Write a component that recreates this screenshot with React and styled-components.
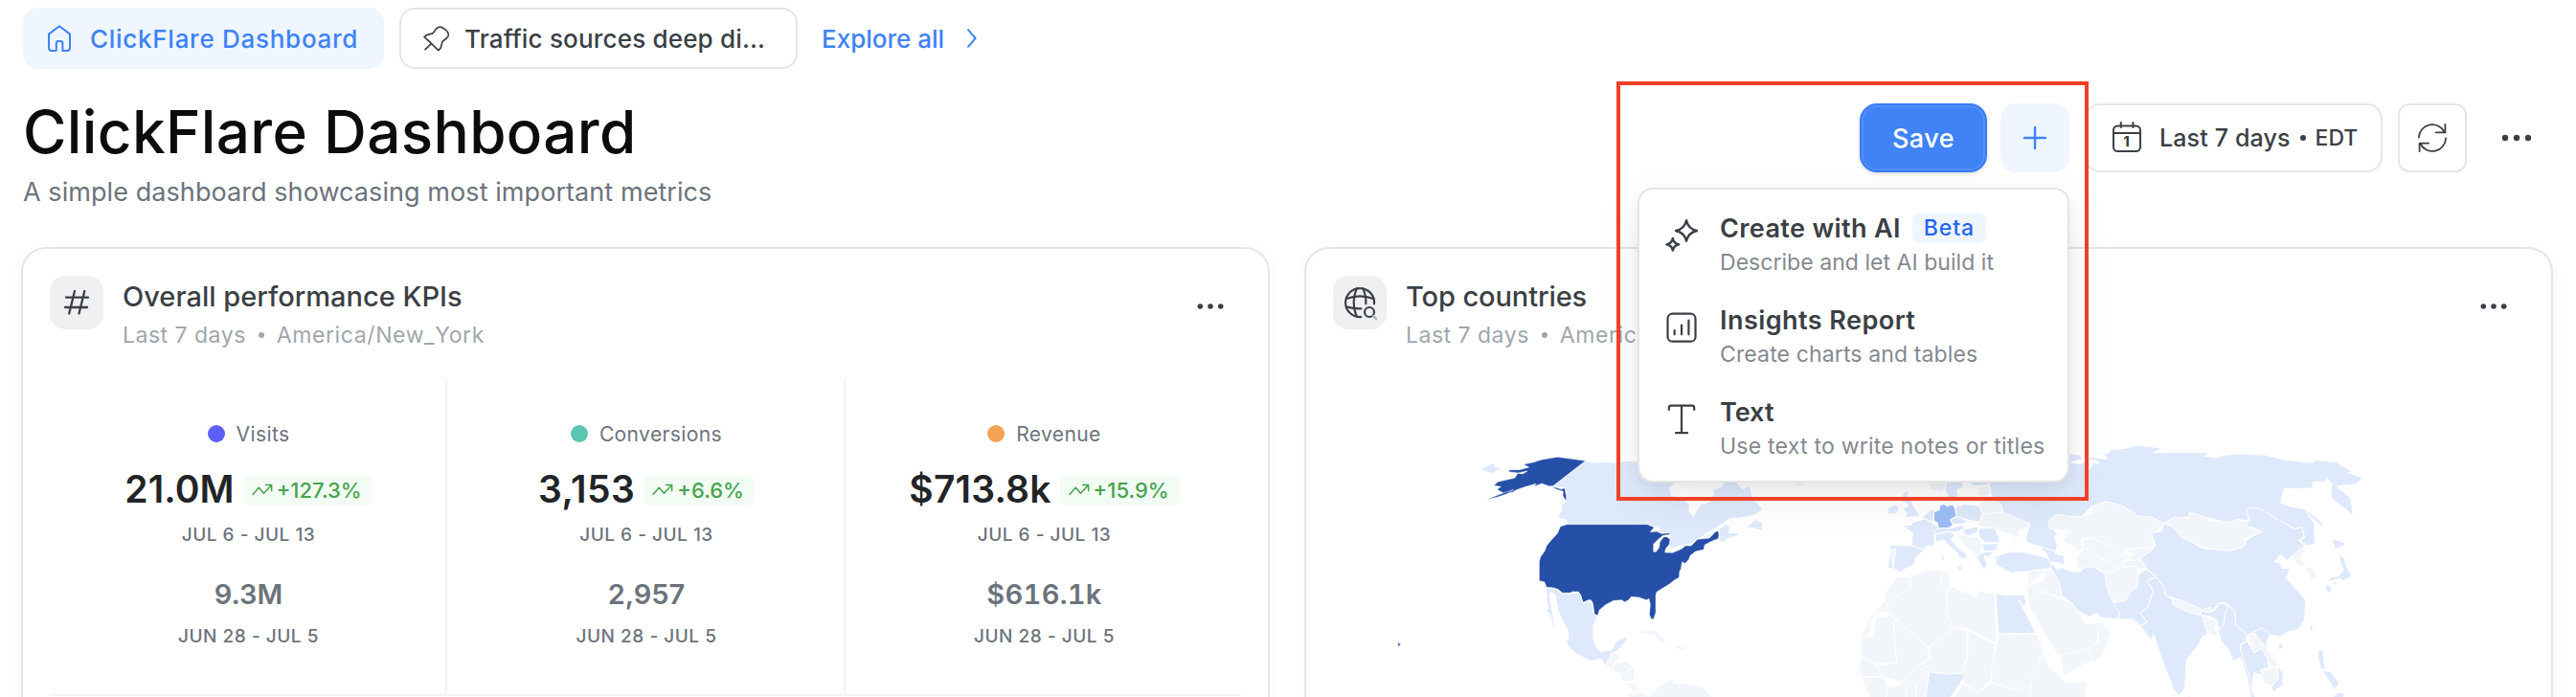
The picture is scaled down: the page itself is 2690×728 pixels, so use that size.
import React from "react";
import styled, { createGlobalStyle } from "styled-components";

const GlobalStyle = createGlobalStyle`
  * {
    box-sizing: border-box;
  }
  body {
    margin: 0;
    background: #fff;
    color: #3b3f45;
    font-family: "Inter", "Liberation Sans", sans-serif;
    overflow: hidden;
  }
  svg {
    display: block;
    flex-shrink: 0;
  }
  button {
    font-family: inherit;
    padding: 0;
    cursor: pointer;
  }
`;

/* icons */

const Stroke = styled.svg`
  fill: none;
  stroke: currentColor;
  stroke-width: ${props => props.$weight || 2};
  stroke-linecap: round;
  stroke-linejoin: round;
`;

const HomeIcon = () => (
  <Stroke width="24" height="28" viewBox="0 0 24 28">
    <path d="M12 1.2 1 9.6V24a3 3 0 0 0 3 3h4.8v-8a2 2 0 0 1 2-2h2.6a2 2 0 0 1 2 2v8H20a3 3 0 0 0 3-3V9.6z" />
  </Stroke>
);

const PinIcon = () => (
  <Stroke width="27" height="27" viewBox="0 0 80 80" $weight={5}>
    <path d="M47 76 3 34Q8 29 15 27L27 24Q31 23 35 16L39 10Q45 2 55 4Q62 6 71 14Q80 23 78 30Q77 34 70 40L61 47Q57 51 56 61Q55 69 47 76z" />
    <path d="M25 55 6 73" />
  </Stroke>
);

const ChevronIcon = () => (
  <Stroke width="10" height="20" viewBox="0 0 10 20">
    <path d="m1 1.2 7.6 8.8L1 18.8" />
  </Stroke>
);

const PlusIcon = () => (
  <Stroke width="26" height="26" viewBox="0 0 26 26" $weight={2.4}>
    <path d="M13 2v22M2 13h22" />
  </Stroke>
);

const CalendarIcon = () => (
  <Stroke width="30" height="32" viewBox="0 0 30 32">
    <rect x="1" y="4.5" width="28" height="26.5" rx="4.5" />
    <path d="M1 12h28M8.8 1v5M21.4 1v5" />
    <DayNumber x="14.5" y="26">
      1
    </DayNumber>
  </Stroke>
);

const DayNumber = styled.text`
  fill: currentColor;
  stroke: none;
  text-anchor: middle;
  font-size: 14px;
  font-weight: 800;
`;

const RefreshIcon = () => (
  <Stroke width="30" height="30" viewBox="0 0 30 30" $weight={1.8}>
    <path d="M.9 14.5A14 14 0 0 1 27.5 9M28.4 1v8.4h-9.6M29.1 15.5A14 14 0 0 1 2.5 21M1.6 29v-8.4h9.6" />
  </Stroke>
);

const DotsIcon = ({ step = 12, r = 3.2 }) => (
  <svg width="32" height="8" viewBox="-16 -4 32 8" fill="currentColor">
    <circle cx={-step} r={r} />
    <circle r={r} />
    <circle cx={step} r={r} />
  </svg>
);

const SparklesIcon = () => (
  <Stroke width="40" height="40" viewBox="0 0 40 40" $weight={2.4}>
    <path d="M25 4.2q2 8.8 11 10.8q-9 2-11 10.8q-2-8.8-11-10.8q9-2 11-10.8z" />
    <path d="M10.8 23q1 5.2 6.3 6.3q-5.3 1-6.3 6.3q-1-5.3-6.3-6.3q5.3-1.1 6.3-6.3z" />
  </Stroke>
);

const ReportIcon = () => (
  <Stroke width="40" height="40" viewBox="0 0 40 40" $weight={2.2}>
    <rect x="5.5" y="5.7" width="29" height="29" rx="5" />
    <path d="M12.6 27.3V23M20 27.3V17.5M27.4 27.3V12.5" />
  </Stroke>
);

const TextIcon = () => (
  <Stroke width="40" height="40" viewBox="0 0 40 40" $weight={2.2}>
    <path d="M6.8 10V8a2.3 2.3 0 0 1 2.3-2.3h21.8A2.3 2.3 0 0 1 33.2 8v2M20 5.7v28.5M14 34.2h12" />
  </Stroke>
);

const HashIcon = () => (
  <Stroke width="56" height="56" viewBox="0 0 56 56" $weight={2.3}>
    <path d="M17 22.7h23M16 33h23M26 16l-5.8 23.5M36.3 16l-5.8 23.5" />
  </Stroke>
);

const GlobeSearchIcon = () => (
  <Stroke width="56" height="56" viewBox="0 0 168 168" $weight={6.5}>
    <path d="M129 88A45 45 0 1 0 88 129" />
    <path d="M74 40Q56 84 74 128M94 40Q104 62 103 88M42 72Q84 56 127 72M44 98Q66 104 88 103" />
    <circle cx="114" cy="114" r="15" />
    <SearchHandle d="m126 126 9 9" />
  </Stroke>
);

const SearchHandle = styled.path`
  stroke: #a3abb3;
`;

const TrendIcon = () => (
  <Stroke width="22" height="13" viewBox="0 0 22 13" $weight={1.5}>
    <path d="m1 11.5 6.3-7.3 5.2 6L20.6 1.5M14.6 1.5h6v6.3" />
  </Stroke>
);

/* page */

const Page = styled.div`
  position: relative;
  width: 2690px;
  height: 728px;
  padding: 8px 24px 0 22px;
  overflow: hidden;
`;

const Label = styled.span`
  white-space: nowrap;
  letter-spacing: ${props => props.$track || 0}px;
`;

const Tabs = styled.nav`
  display: flex;
  align-items: center;
  height: 64px;
  margin-left: 2px;
`;

const Tab = styled.a`
  display: flex;
  align-items: center;
  gap: ${props => (props.$active ? 20 : 16)}px;
  width: ${props => props.$width}px;
  height: 64px;
  margin-right: 16px;
  padding-left: ${props => (props.$active ? 26 : 23)}px;
  border: ${props => (props.$active ? "0" : "2px solid #e5e5e5")};
  border-radius: 16px;
  background: ${props => (props.$active ? "#eff6ff" : "#fff")};
  color: ${props => (props.$active ? "#3e82f7" : "#3b3f45")};
  font-size: 26px;
  font-weight: 500;
`;

const ExploreLink = styled.a`
  display: flex;
  align-items: center;
  gap: 24px;
  margin-left: 9px;
  color: #3e82f7;
  font-size: 26px;
  font-weight: 500;
`;

const Header = styled.header`
  display: flex;
  justify-content: space-between;
  height: 158px;
  margin: 28px 2px 0;
`;

const Title = styled.h1`
  margin: 0;
  color: #0b0c0e;
  font-size: 62px;
  font-weight: 500;
  line-height: 75px;
  letter-spacing: 0.35px;
`;

const Subtitle = styled.p`
  margin: 0;
  color: #6c737b;
  font-size: 27px;
  line-height: 52px;
  letter-spacing: 0.07px;
`;

const Actions = styled.div`
  display: flex;
  gap: 16px;
  height: 72px;
  margin-top: 8px;
`;

const SaveButton = styled.button`
  width: 133px;
  height: 72px;
  margin-right: -2px;
  border: 2px solid #3a7df5;
  border-radius: 18px;
  background: #4083f7;
  box-shadow: inset 0 0 0 2px rgba(255, 255, 255, 0.1),
    0 2px 4px rgba(0, 0, 0, 0.12);
  color: #fff;
  font-size: 27px;
  font-weight: 500;
`;

const AddWrap = styled.div`
  position: relative;
`;

const SquareButton = styled.button`
  display: flex;
  align-items: center;
  justify-content: center;
  width: 72px;
  height: 72px;
  border: ${props => (props.$outlined ? "2px solid #e5e5e5" : "0")};
  border-radius: ${props => (props.$outlined ? 12 : 16)}px;
  background: ${props => (props.$tinted ? "#eff6ff" : "transparent")};
  color: ${props => (props.$tinted ? "#3e82f7" : "#3b3f45")};
`;

const DateButton = styled.button`
  display: flex;
  align-items: center;
  width: 311px;
  height: 72px;
  padding-left: 27px;
  border: 2px solid #e5e5e5;
  border-radius: 16px;
  background: #fff;
  color: #3b3f45;
  font-size: 25px;
  font-weight: 500;
  svg {
    margin: -2px 19px 0 0;
  }
`;

const Bullet = styled.i`
  width: 6px;
  height: 6px;
  margin: 0 ${props => props.$gap}px;
  border-radius: 50%;
  background: currentColor;
`;

const Zone = styled.span`
  font-size: 23px;
`;

/* add menu */

const Menu = styled.div`
  position: absolute;
  z-index: 2;
  top: 88px;
  right: 0;
  width: 451px;
  height: 308px;
  padding: 8px;
  border: 2px solid #e5e5e5;
  border-radius: 16px;
  background: #fff;
  box-shadow: 0 16px 48px rgba(0, 0, 0, 0.08), 0 4px 12px rgba(0, 0, 0, 0.05);
`;

const MenuItem = styled.div`
  display: flex;
  gap: 20px;
  height: 96px;
  padding: 14px 0 0 16px;
  svg {
    margin-top: 6px;
  }
`;

const MenuTitle = styled.div`
  display: flex;
  align-items: center;
  gap: 12px;
  height: 36px;
  font-size: 27px;
  font-weight: 600;
`;

const MenuText = styled.div`
  color: #85888f;
  font-size: 23px;
  line-height: 37px;
`;

const Beta = styled.span`
  width: 77px;
  height: 32px;
  border-radius: 8px;
  background: #eff6ff;
  color: #2563f5;
  font-size: 23px;
  font-weight: 500;
  line-height: 32px;
  letter-spacing: 0.9px;
  text-align: center;
`;

/* cards */

const Cards = styled.main`
  display: grid;
  grid-template-columns: 1304px 1304px;
  gap: 36px;
`;

const Card = styled.section`
  height: 520px;
  padding: 28px;
  border: 2px solid #e5e5e5;
  border-radius: 26px;
  background: #fff;
  box-shadow: 0 2px 16px rgba(0, 0, 0, 0.03);
`;

const CardHeader = styled.div`
  display: flex;
  height: 81px;
`;

const CardIcon = styled.div`
  width: 56px;
  height: 56px;
  margin-right: 20px;
  border-radius: 16px;
  background: #eff0f2;
`;

const CardTitle = styled.h2`
  margin: 0;
  font-size: 29px;
  font-weight: 500;
  line-height: 43px;
`;

const CardMeta = styled.div`
  display: flex;
  align-items: center;
  height: 38px;
  color: #a0a6ad;
  font-size: 23px;
  letter-spacing: 0.5px;
`;

const CardMenu = styled.button`
  display: flex;
  align-items: center;
  justify-content: center;
  width: 64px;
  height: 64px;
  margin-left: auto;
  border: 0;
  background: none;
  color: #3b3f45;
`;

const KpiGrid = styled.div`
  display: grid;
  grid-template-columns: 415px 416px 1fr;
  height: 331px;
  margin-top: 27px;
  border-bottom: 2px solid #f3f4f5;
`;

const Kpi = styled.div`
  display: flex;
  flex-direction: column;
  align-items: center;
  padding: 37px 0 0 2px;
  border-right: 2px solid #f3f4f5;
  &:last-child {
    border-right: 0;
  }
`;

const KpiName = styled.div`
  display: flex;
  align-items: center;
  gap: 12px;
  height: 40px;
  color: #6c737b;
  font-size: 21px;
  letter-spacing: 0.4px;
`;

const KpiDot = styled.i`
  width: 18px;
  height: 18px;
  border-radius: 50%;
  background: ${props => props.$color};
`;

const KpiValue = styled.div`
  display: flex;
  align-items: center;
  gap: 9px;
  height: 60px;
  margin-top: 7px;
  color: #222428;
  font-size: 39px;
  font-weight: 600;
`;

const Delta = styled.span`
  display: flex;
  align-items: center;
  gap: 4px;
  height: 32px;
  margin-top: 3px;
  padding: 0 11px 0 9px;
  border-radius: 8px;
  background: #f2fcf5;
  color: #46a44c;
  font-size: 22px;
  font-weight: 500;
`;

const Period = styled.div`
  margin-top: ${props => props.$top}px;
  color: #6c737b;
  font-size: 19px;
  font-weight: 500;
  line-height: 30px;
  letter-spacing: 0.52px;
`;

const PreviousValue = styled.div`
  margin-top: 27px;
  color: #6c737b;
  font-size: 29px;
  font-weight: 600;
  line-height: 40px;
  letter-spacing: ${props => props.$track || 0}px;
  font-variant-numeric: ${props => (props.$track ? "tabular-nums" : "normal")};
`;

const Map = styled.svg`
  margin-top: 27px;
`;

const tones = {
  top: "#264fa8",
  mid: "#9dbdf6",
  low: "#dee9fc",
  none: "#f2f5fa"
};

const Country = styled.path`
  fill: ${props => tones[props.$tone]};
  stroke: #fff;
  stroke-width: ${props => (props.$tone === "top" ? 1.5 : 3)};
  stroke-linejoin: round;
`;

const Highlight = styled.div`
  position: absolute;
  z-index: 3;
  top: 85px;
  left: 1688px;
  width: 493px;
  height: 438px;
  border: 4px solid #ee4126;
  pointer-events: none;
`;

const kpis = [
  {
    name: "Visits",
    color: "#5d5ff8",
    value: "21.0M",
    track: 0.1,
    delta: "+127.3%",
    previous: "9.3M"
  },
  {
    name: "Conversions",
    color: "#5ac6b4",
    value: "3,153",
    track: 0.5,
    delta: "+6.6%",
    previous: "2,957"
  },
  {
    name: "Revenue",
    color: "#f4a256",
    value: "$713.8k",
    track: 0.2,
    delta: "+15.9%",
    previous: "$616.1k",
    previousTrack: 0.3
  }
];

const menuItems = [
  {
    icon: <SparklesIcon />,
    title: "Create with AI",
    track: 0.38,
    beta: true,
    text: "Describe and let AI build it",
    textTrack: 0.04
  },
  {
    icon: <ReportIcon />,
    title: "Insights Report",
    track: 0.45,
    text: "Create charts and tables",
    textTrack: 0.13
  },
  {
    icon: <TextIcon />,
    title: "Text",
    text: "Use text to write notes or titles",
    textTrack: 0.23
  }
];

const americas = [
  ["low", "M48 152 68 140 88 131 95 142 118 147 100 154 85 164 72 160z"],
  ["low", "M377 124 400 130 430 127 470 130 500 124 530 126 560 120 660 110V192L650 200 640 210 645 232 662 236 690 245 703 262 702 285 715 298 728 275 738 262 765 252 778 228 775 215 805 205 810 185 850 190 868 212 892 203 900 240 930 272 928 280 905 295 860 303 830 305 808 320 790 332 765 346 742 362 708 382 692 390 672 390 650 400 640 395 642 370 640 350 615 350 600 346 612 338 592 330 570 322H318L318 310 300 306 290 296 300 285 303 262 316 248 318 222 312 210 295 208 278 203z"],
  ["top", "M318 323H570L592 332 580 347 600 345 615 352 640 350 642 355 620 358 605 370 590 385V409H598L608 395 610 378 622 362 632 362 642 370 640 385 628 400 626 411 650 412 678 400 690 390 708 390 728 370 765 366 785 345 793 342 796 355 793 368 782 372 768 378 750 388 748 402 722 408 706 420 700 434 688 446 680 440 676 462 672 470 670 490 655 498 640 510 600 535 597 545V600L590 620 583 620 577 605 580 575 576 556 568 560 555 556 545 552 520 550 512 560 500 566 490 560 465 562 440 575 420 592 416 608 405 605 400 570 394 560 385 560 370 568 364 560 362 545 355 534 335 534 330 538H305L290 526 275 522 255 520 248 503 232 500V440L236 425 250 405 255 390 272 370 290 350 298 330z"],
  ["top", "M377 124 275 203 262 203 240 195 215 205 222 196 190 205 160 215 150 222 125 228 100 214 112 205 90 202 102 190 135 182 155 178 165 163 180 165 195 156 165 162 135 158 140 152 170 152 200 144 183 135 215 128 240 120 290 112 350 120z"],
  ["top", "M66 246 110 228 152 214 130 228 100 238zM270 203 302 213 312 209 317 235 316 250 306 234 307 220 285 213z"],
  ["low", "M740 365 790 343 800 335 818 322 830 334 825 350 858 350 855 358 820 370 803 381 797 372 795 342 785 342 768 362zM880 334 905 312 920 300 914 312 932 318 930 342 915 338 900 334z"],
  ["low", "M255 523 275 523 305 540H330L355 537 362 547 370 571 385 563 397 570 404 607 415 610 402 640 401 680 410 708 425 722 460 716 472 690 505 675 508 680 490 708 470 722 455 730 452 745 440 765 425 743 395 752 350 730 322 705 316 690 324 680 322 655 305 625 290 590 283 545 270 535 265 545 272 590 278 625 284 648 275 640 268 610 252 590 262 585 254 560z"],
  ["none", "M440 765 460 728 485 727 480 745 470 752 460 775zM460 775 472 757 500 752 530 768 500 790 485 792zM485 792 500 790 530 768V815L495 815zM500 818 530 820 545 840 530 848z"],
  ["none", "M540 662 565 652 600 658 620 680 635 690 610 692 595 672zM655 712 668 700 692 710 680 716z"],
  ["none", "M505 852 530 855 550 850 575 862 610 830 650 808 655 820 690 822 740 830 760 850 775 864V880H520z"],
  ["none", "M1025 185H1070L1045 206z"]
];

const westernWorld = [
  ["low", "M262 225 275 218 282 225 275 235 295 240 290 258 300 276 312 290 310 298 265 302 275 288 260 275 276 268 275 258 255 250zM215 270 235 262 250 268 242 288 215 292z"],
  ["none", "M340 190H398L395 212 380 222 350 215z"],
  ["low", "M398 190H448L452 205 430 215 435 235 408 248 395 215zM470 190H532L528 200 480 202z"],
  ["none", "M495 210 532 200 536 225 520 237 488 232 500 222zM380 240 392 234 386 252z"],
  ["mid", "M378 262 390 260 400 266 418 261 425 275 428 298 410 308 418 325 404 335H372L370 318 358 312V285L375 278z"],
  ["low", "M428 268 455 260 500 265 510 290 500 315 470 310 428 298z"],
  ["none", "M500 265 520 240 545 245 575 262 570 285 515 290z"],
  ["none", "M515 290 570 285 600 283 658 320 655 335 620 345 630 360 610 368 598 352 565 345 550 335 500 328V315z"],
  ["low", "M260 328 290 325V318L310 312 330 305 372 330 370 342 358 358 362 378 355 392 340 390 325 400 288 390 292 350zM322 300 345 280 360 275 355 315 330 306z"],
  ["low", "M218 388 288 390 328 402 300 428 297 450 270 462 250 474 235 462 213 460 222 400z"],
  ["none", "M217 402H240L230 462"],
  ["low", "M362 355 405 345 425 355 412 370 435 398 462 418 455 434 445 425 442 440 432 412 400 385 390 372 365 378zM425 458 448 452 444 468zM382 415H390V436L382 438zM385 397 389 396 388 410z"],
  ["low", "M360 342 375 335H410L450 325 452 338 425 348 400 345 362 354zM410 308 430 300 465 312 450 322 418 322z"],
  ["low", "M450 340 495 330 498 345 470 360 450 352zM498 345 505 335 550 335 564 365 560 380 520 380 500 362zM510 385 560 382 555 405 515 408z"],
  ["none", "M422 356 450 352 470 360 500 363 512 400 496 422 480 412 450 385 440 365z"],
  ["low", "M492 425 515 410 550 408 530 425 515 420 525 450 516 466 500 440z"],
  ["low", "M550 425 600 408 640 410 720 430 728 460 655 470 600 475 555 450z"],
  ["low", "M680 384 715 395 740 405 738 415 765 420 768 450 740 442 720 440 712 415z"],
  ["none", "M245 485 285 490V520L270 530 212 572 215 598H180L160 632 165 655 150 675H130L155 620 200 570 210 535 235 500z"],
  ["none", "M285 488 340 468 385 466 380 500 400 540V600L425 648 345 705 330 700 212 598V572L270 530 287 520z"],
  ["none", "M385 466 405 470 410 505 398 535 382 505z"],
  ["none", "M405 525 420 520 495 554 500 530 550 540 555 695 465 650 425 648 400 610 400 540z"],
  ["low", "M552 540 590 545 640 543 648 570 640 580 625 560 678 664 560 666z"],
  ["none", "M130 677 165 675 178 612H212V600L245 625H232L242 755 175 760 150 742 132 740z"],
  ["none", "M232 625H245L335 705 345 740 310 765 260 820 200 800 175 765 242 757z"],
  ["none", "M345 705 425 648 462 655V740L445 790H345L305 770 345 745z"],
  ["none", "M465 655 550 700 538 810 500 850 450 820 445 790 465 740z"],
  ["none", "M560 667H682L702 720 685 760 660 830 610 840 540 820V770L558 695z"],
  ["low", "M345 785 400 792 450 790 452 805 420 850 400 880H332L335 830z"],
  ["none", "M132 742 150 742 175 765 200 800H130L122 765zM130 803 200 800 215 835 200 880H165zM215 835 250 825 305 770 343 788 332 880H205zM272 822V880M302 822V880"],
  ["none", "M702 728 720 770 755 800 770 820 842 815 830 880H660L665 800z"],
  ["none", "M450 822 500 850 540 820 610 840 660 830 662 880H410z"],
  ["none", "M655 540 690 530 740 550 790 570 835 635 875 630 870 690 850 712 770 735 752 740 720 690 680 620 655 580z"],
  ["none", "M655 470 740 465 755 510 780 560 740 548 690 530 655 560 650 520zM652 515 700 500 705 468"],
  ["none", "M752 735 850 710 870 738 765 798z"]
];

const asia = [
  ["low", "M-308 192V110L-60 100-52 102-25 105-15 118-40 125-55 128-20 135-2 120 5 150 20 130 38 134 30 124 0 120 0 112 60 118 55 105 15 98 66 100 70 90 120 84 160 75 235 84 208 98 330 98 370 98 380 105 365 108 405 115 430 106 470 102 560 106 610 120 700 130 715 122 780 128 832 160 815 160 862 178 838 198 780 203 825 242 832 295 762 240 765 195 750 178 745 190 705 190V210L615 212 605 255 640 268 680 275 710 322 712 385 685 390 665 370 680 365 672 332 650 338 600 310 540 275 505 270 498 280 508 312 470 308 440 318 365 300 318 288V300L270 302 240 320 200 300 160 298 110 265 60 262 60 252 45 255 10 268-20 300-45 300-100 292-120 310V330L-95 350-105 365-95 385-100 408-140 395-190 380-195 365-185 340-182 320-265 285-270 262-300 245z"],
  ["none", "M-120 310-100 292-45 300-20 300 18 290 10 268 60 252 110 265 160 298 200 300 238 320 215 345 198 350 210 395 120 400 110 420 60 385 10 365-20 370-15 400-30 410-40 395-60 385-75 375-70 352-55 345-80 340-120 335z"],
  ["none", "M-15 372 10 365 60 385 110 420 128 412 118 440 115 465 90 465 30 420 0 398-15 402zM-35 430-15 402 0 398 30 420 100 455 70 490 30 458-30 460zM118 402 205 395 200 405 165 430 145 435 118 430 145 418zM108 440 165 432 185 462 115 466z"],
  ["none", "M55 475 90 470 100 460 150 452 160 480 155 520 130 540 120 562 95 566 75 556 60 520z"],
  ["low", "M-118 440-95 465-80 460-50 470-20 472-15 460 15 455 55 478 60 520 75 558 98 590 95 620 40 615 30 600 5 612-30 595-50 570-80 545-90 500-115 460z"],
  ["low", "M95 620 100 600 80 568 120 563 130 540 155 520 160 480 185 465 215 488 185 500 205 530 190 580 165 600 185 630 165 640 140 620z"],
  ["low", "M215 488 240 520 245 545 270 560 275 575 350 605 358 595 400 590 412 570 430 570 440 585 430 605 425 640 410 650 405 625 385 612 358 608 372 640 375 668 360 675 345 705 310 745 305 835 285 860 270 840 232 745 215 690 205 662 208 675 195 682 165 640 187 630 165 600 190 580 205 530 185 500z"],
  ["low", "M238 320 270 332 295 365 320 375 360 398 440 405 485 395 497 372 545 345 520 335 495 328 500 312 508 312 498 280 505 270 540 275 600 310 650 338 672 332 678 362 662 372 680 392 655 412 620 438 618 428 605 418 585 440 605 445 608 460 635 462 622 490 670 545 683 560 680 620 660 652 630 660 600 675 570 668 545 648 520 660 500 672 485 655 465 640 460 595 430 568 410 570 395 590 355 595 350 588 290 560 268 553 245 545 240 520 215 488 185 462 165 430 200 405 212 390 200 350 232 345z"],
  ["none", "M240 320 270 300 318 304V286L365 298 380 312 440 316 470 308 500 312 497 328 520 335 547 347 520 355 490 372 497 385 485 395 440 407 360 396 325 375 295 365 275 335z"],
  ["none", "M650 412 680 390 682 408 665 425 680 452 660 452 642 430zM682 450 705 460 718 490 700 497z"],
  ["low", "M785 418 805 430 810 455 828 487 800 500 790 492 755 502 757 490 785 485 802 465 795 450zM765 368 805 380 802 392 775 400zM742 512 760 515 765 535 752 538zM765 505 780 502 775 515zM680 272 735 318 735 330 700 300zM702 627 707 662 696 650zM597 700 610 695 612 710 598 717z"],
  ["low", "M722 715 738 718 740 750 745 778 730 775 722 745zM735 780 760 785 788 820 775 842 750 805zM768 864 785 850 803 850V875H768z"],
  ["low", "M440 578 460 595 465 640 485 655 500 672 495 690 478 700 480 720 495 750 510 800 522 880H510L500 800 480 740 455 752 445 720 420 690 408 655 425 640 430 605z"],
  ["low", "M500 690 525 725 545 712 565 745 568 770 542 780 545 795 520 788 515 840 525 864V880H512L508 800 480 720 480 700z"],
  ["none", "M500 672 520 662 545 690 590 745 592 770 570 770 565 745 545 712 520 725z"],
  ["low", "M520 660 545 648 575 668 560 690 565 720 612 790 612 825 580 850 577 832 598 805 595 765 560 710 545 690z"],
  ["none", "M542 780 592 772 598 805 575 828 555 820z"],
  ["none", "M265 555 290 560 355 588V607L320 600 268 575zM360 590 385 582 396 595 370 600zM358 608 405 625 398 650 410 672 385 668 370 650z"],
  ["none", "M30 620 75 663 60 700 45 735 15 755 3 712 34 690zM315 846 328 880H310z"],
  ["low", "M403 81 438 84 432 88z"]
];

const mapRegions = [
  { x: 414, shapes: americas },
  { x: 1524, shapes: westernWorld },
  { x: 2364, shapes: asia }
];

const WorldMap = () => (
  <Map width="1244" height="332" viewBox="0 0 3732 996">
    {mapRegions.map(region => (
      <g key={region.x} transform={`translate(${region.x} 132)`}>
        {region.shapes.map(([tone, d]) => (
          <Country key={d} $tone={tone} d={d} />
        ))}
      </g>
    ))}
    {/* Hawaii */}
    <Country $tone="top" d="M202 825 213 831 205 838z" />
  </Map>
);

const WidgetHeader = ({ icon, title, track }) => (
  <CardHeader>
    <CardIcon>{icon}</CardIcon>
    <div>
      <CardTitle>
        <Label $track={track}>{title}</Label>
      </CardTitle>
      <CardMeta>
        Last 7 days
        <Bullet $gap={13} />
        <Label $track={0.6}>America/New_York</Label>
      </CardMeta>
    </div>
    <CardMenu aria-label="Widget menu">
      <DotsIcon step={10.7} r={2.8} />
    </CardMenu>
  </CardHeader>
);

const AddMenu = () => (
  <Menu>
    {menuItems.map(item => (
      <MenuItem key={item.title}>
        {item.icon}
        <div>
          <MenuTitle>
            <Label $track={item.track}>{item.title}</Label>
            {item.beta && <Beta>Beta</Beta>}
          </MenuTitle>
          <MenuText>
            <Label $track={item.textTrack}>{item.text}</Label>
          </MenuText>
        </div>
      </MenuItem>
    ))}
  </Menu>
);

const App = () => {
  return (
    <React.Fragment>
      <GlobalStyle />
      <Page>
        <Tabs>
          <Tab $active $width={377}>
            <HomeIcon />
            <Label $track={0.72}>ClickFlare Dashboard</Label>
          </Tab>
          <Tab $width={416}>
            <PinIcon />
            <Label $track={0.18}>Traffic sources deep di...</Label>
          </Tab>
          <ExploreLink>
            <Label>Explore all</Label>
            <ChevronIcon />
          </ExploreLink>
        </Tabs>

        <Header>
          <div>
            <Title>ClickFlare Dashboard</Title>
            <Subtitle>
              A simple dashboard showcasing most important metrics
            </Subtitle>
          </div>
          <Actions>
            <SaveButton>
              <Label $track={0.5}>Save</Label>
            </SaveButton>
            <AddWrap>
              <SquareButton $tinted aria-label="Add">
                <PlusIcon />
              </SquareButton>
              <AddMenu />
            </AddWrap>
            <DateButton>
              <CalendarIcon />
              <Label $track={0.14}>Last 7 days</Label>
              <Bullet $gap={10} />
              <Zone>EDT</Zone>
            </DateButton>
            <SquareButton $outlined aria-label="Refresh">
              <RefreshIcon />
            </SquareButton>
            <SquareButton aria-label="More">
              <DotsIcon />
            </SquareButton>
          </Actions>
        </Header>

        <Cards>
          <Card>
            <WidgetHeader icon={<HashIcon />} title="Overall performance KPIs" />
            <KpiGrid>
              {kpis.map(kpi => (
                <Kpi key={kpi.name}>
                  <KpiName>
                    <KpiDot $color={kpi.color} />
                    {kpi.name}
                  </KpiName>
                  <KpiValue>
                    <Label $track={kpi.track}>{kpi.value}</Label>
                    <Delta>
                      <TrendIcon />
                      {kpi.delta}
                    </Delta>
                  </KpiValue>
                  <Period $top={4}>JUL 6 - JUL 13</Period>
                  <PreviousValue $track={kpi.previousTrack}>
                    {kpi.previous}
                  </PreviousValue>
                  <Period $top={9}>JUN 28 - JUL 5</Period>
                </Kpi>
              ))}
            </KpiGrid>
          </Card>
          <Card>
            <WidgetHeader
              icon={<GlobeSearchIcon />}
              title="Top countries"
              track={-0.1}
            />
            <WorldMap />
          </Card>
        </Cards>

        <Highlight />
      </Page>
    </React.Fragment>
  );
};

export default App;
